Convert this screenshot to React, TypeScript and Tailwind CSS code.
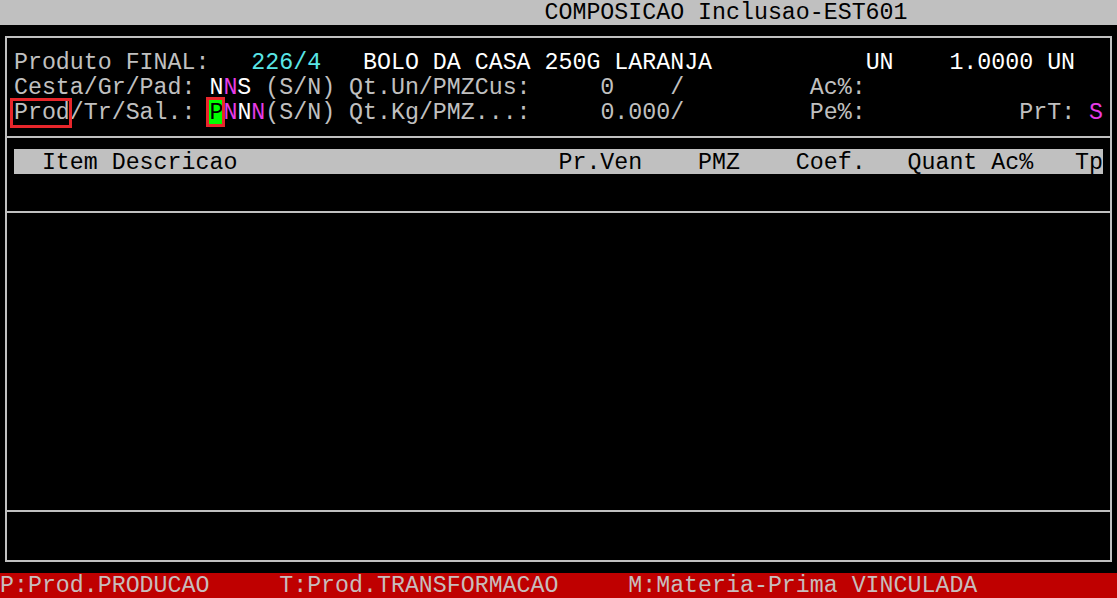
const gray = "text-[#c0c0c0]";

const Rule = () => (
  <div className="flex h-[24.92px] items-center">
    <div className="h-[2px] w-full bg-[#c0c0c0]" />
  </div>
);

const Blank = () => <div className="h-[24.92px]" />;

const Line = ({ children }: { children: React.ReactNode }) => (
  <div className={`h-[24.92px] pl-[6.96px] pt-[1.5px] ${gray}`}>{children}</div>
);

const Magenta = ({ c }: { c: string }) => (
  <span className="text-[#e63ce6]">{c}</span>
);

const White = ({ c }: { c: string }) => <span className="text-white">{c}</span>;

export default function App() {
  return (
    <div className="flex h-[598px] w-[1117px] flex-col overflow-hidden whitespace-pre bg-black font-['Liberation_Mono',monospace] text-[23.27px] leading-[24.92px]">
      {/* title bar */}
      <div className="h-[24.92px] shrink-0 bg-[#c0c0c0] pl-[544.5px] pt-[1px] text-black">
        COMPOSICAO Inclusao-EST601
      </div>

      {/* main box */}
      <div className="ml-[5px] mt-[11.5px] flex w-[1107px] shrink-0 flex-col border-2 border-[#c0c0c0] pb-[11.5px] pt-[11.43px]">
        <Line>
          {"Produto FINAL:   "}
          <span className="text-[#5ae6e6]">226/4</span>
          {"   "}
          <White c="BOLO DA CASA 250G LARANJA           UN    1.0000 UN" />
        </Line>
        <Line>
          {"Cesta/Gr/Pad: "}
          <White c="N" />
          <Magenta c="N" />
          <White c="S" />
          {" (S/N) Qt.Un/PMZCus:     0    /         Ac%:"}
        </Line>
        <Line>
          <span className="relative">
            Prod
            <span className="absolute -bottom-[2px] -left-[4px] -right-[2px] -top-[2px] border-[3px] border-[#e8262b]" />
          </span>
          {"/Tr/Sal.: "}
          <span className="relative bg-[#00ff00] text-black">
            P
            <span className="absolute -bottom-[1px] -left-[3px] -right-[2px] -top-[3px] border-[3px] border-[#e8262b]" />
          </span>
          <Magenta c="N" />
          <White c="N" />
          <Magenta c="N" />
          {"(S/N) Qt.Kg/PMZ...:     0.000/         Pe%:           PrT: "}
          <Magenta c="S" />
        </Line>
        <Rule />
        <div className="ml-[6.96px] h-[24.92px] w-[1089.1px] bg-[#c0c0c0] pt-[1.5px] text-black">
          {"  Item Descricao                       Pr.Ven    PMZ    Coef.   Quant Ac%   Tp"}
        </div>
        <Blank />
        <Rule />
        <div className="h-[274.1px]" />
        <Rule />
        <Blank />
      </div>

      {/* footer */}
      <div className="mt-[11.5px] h-[24.92px] shrink-0 bg-[#bf0000] pt-[1.5px] leading-[23.4px] text-[#c8bcbc]">
        {"P:Prod.PRODUCAO     T:Prod.TRANSFORMACAO     M:Materia-Prima VINCULADA"}
      </div>
    </div>
  );
}
